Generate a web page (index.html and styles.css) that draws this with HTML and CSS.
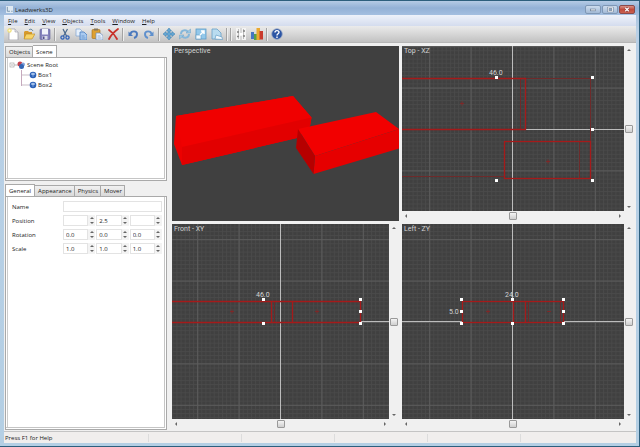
FILE: index.html
```html
<!DOCTYPE html>
<html lang="en">
<head>
	<meta charset="UTF-8">
	<title>Leadwerks3D</title>
	<link rel="stylesheet" href="styles.css">
</head>
<body>
<div class="window">
	<header class="titlebar">
		<svg class="app-icon" viewBox="0 0 8 8"><rect width="8" height="8" fill="#dfe9f2"/><path d="M1.500 1v5h3M6 6h1.500" stroke="#6f8ba5" fill="none"/></svg>
		<h1>Leadwerks3D</h1>
		<div class="win-buttons">
			<button type="button" aria-label="Minimize"><svg viewBox="0 0 16 8"><rect x="5" y="3.500" width="6" height="2" fill="#fff" stroke="#60748c" stroke-width=".7"/></svg></button>
			<button type="button" aria-label="Maximize"><svg viewBox="0 0 16 8"><rect x="6" y="2" width="5" height="4" fill="#8fa6c2" stroke="#60748c" stroke-width="2"/><rect x="6" y="2" width="5" height="4" fill="none" stroke="#fff"/></svg></button>
			<button type="button" class="close" aria-label="Close"><svg viewBox="0 0 16 8"><path d="M6 2l4 4M10 2l-4 4" stroke="#803030" stroke-width="2.500"/><path d="M6 2l4 4M10 2l-4 4" stroke="#fff" stroke-width="1.400"/></svg></button>
		</div>
	</header>

	<nav class="menubar">
		<a href="#"><u>F</u>ile</a>
		<a href="#"><u>E</u>dit</a>
		<a href="#"><u>V</u>iew</a>
		<a href="#"><u>O</u>bjects</a>
		<a href="#"><u>T</u>ools</a>
		<a href="#"><u>W</u>indow</a>
		<a href="#"><u>H</u>elp</a>
	</nav>

	<div class="toolbar">
		<button type="button" aria-label="New"><svg viewBox="0 0 12 12"><path d="M2 1h6l3 3v8H2z" fill="#fff" stroke="#9a9aa4" stroke-width=".7"/><path d="M8 1v3h3" fill="#e4e4ea" stroke="#9a9aa4" stroke-width=".6"/><circle cx="2.500" cy="2.500" r="2.200" fill="#f0df7a"/><circle cx="2.500" cy="2.500" r="1" fill="#fffbe0"/></svg></button>
		<button type="button" aria-label="Open"><svg viewBox="0 0 12 12"><path d="M1 4l1-1h3l1 1h3v7H1z" fill="#d79a2c"/><path d="M3 6h9l-3 5H1z" fill="#f7d468" stroke="#b98722" stroke-width=".6"/><path d="M6 2c1-1.500 3-1 4 1" stroke="#688ba8" fill="none"/></svg></button>
		<button type="button" aria-label="Save"><svg viewBox="0 0 12 12"><rect x="1" y="1" width="10" height="10.500" rx="1" fill="#8483bd" stroke="#5f5e98" stroke-width=".6"/><rect x="3" y="1" width="6" height="5.500" fill="#f1f4fb"/><rect x="3.500" y="8" width="5" height="3.500" fill="#d8dbe8"/><rect x="4" y="8.500" width="1.500" height="2.500" fill="#55548c"/></svg></button>
		<span class="sep"></span>
		<button type="button" aria-label="Cut"><svg viewBox="0 0 12 12"><path d="M4 1l3.500 7M8.500 1L4.500 8" stroke="#49688d" stroke-width="1.200"/><circle cx="3.500" cy="9.500" r="1.600" fill="none" stroke="#2f61b8" stroke-width="1.300"/><circle cx="8.500" cy="9.500" r="1.600" fill="none" stroke="#2f61b8" stroke-width="1.300"/></svg></button>
		<button type="button" aria-label="Copy"><svg viewBox="0 0 12 12"><path d="M1 1h4l2 2v5H1z" fill="#e6f0fb" stroke="#7fa5d2" stroke-width=".7"/><path d="M5 4h4l3 3v5H5z" fill="#a9caf0" stroke="#4a7dc0" stroke-width=".8"/><path d="M6.500 8h3M6.500 10h4" stroke="#4a7dc0" stroke-width=".6"/></svg></button>
		<button type="button" aria-label="Paste"><svg viewBox="0 0 12 12"><rect x="1" y="1.500" width="8" height="9" rx="1" fill="#dea132" stroke="#a06b1c" stroke-width=".6"/><rect x="3" y=".5" width="4" height="2" fill="#85775c"/><path d="M5 5h4l3 2.500V12H5z" fill="#e8f0fb" stroke="#6d8fbd" stroke-width=".7"/><path d="M6.500 8h3M6.500 10h4" stroke="#6d8fbd" stroke-width=".6"/></svg></button>
		<button type="button" aria-label="Delete"><svg viewBox="0 0 12 12"><path d="M2 2c3 2 6 5 8 9M11 1C7 4 4 7 2 11" fill="none" stroke="#c8322b" stroke-width="1.800" stroke-linecap="round"/></svg></button>
		<span class="sep"></span>
		<button type="button" aria-label="Undo"><svg viewBox="0 0 12 12"><path d="M3.500 6c.5-3.500 6.500-3.500 6.500 0 0 2-1 3.500-3 4" fill="none" stroke="#4b79bd" stroke-width="1.900"/><path d="M1.500 3.500v4.500H6z" fill="#4b79bd"/></svg></button>
		<button type="button" aria-label="Redo"><svg viewBox="0 0 12 12"><path d="M8.500 6C8 2.500 2 2.500 2 6c0 2 1 3.500 3 4" fill="none" stroke="#5f90cd" stroke-width="1.900"/><path d="M10.500 3.500v4.500H6z" fill="#5f90cd"/></svg></button>
		<span class="sep"></span>
		<button type="button" aria-label="Move"><svg viewBox="0 0 12 12"><path d="M6 0l2.500 3H7v2h2V3.500L12 6 9 8.500V7H7v2h1.500L6 12 3.500 9H5V7H3v1.500L0 6l3-2.500V5h2V3H3.500z" fill="#65a7d4" stroke="#3679aa" stroke-width=".5"/></svg></button>
		<button type="button" aria-label="Rotate"><svg viewBox="0 0 12 12"><path d="M2 6c0-4 5-5 7-2M10 6c0 4-5 5-7 2" fill="none" stroke="#85b7da" stroke-width="2"/><path d="M7 5h4.500V1zM5 7H.5v4z" fill="#9cc9e6" stroke="#6ba1c7" stroke-width=".5"/></svg></button>
		<button type="button" aria-label="Scale"><svg viewBox="0 0 12 12"><rect x="1" y="1" width="10" height="10" fill="#93c8ea" stroke="#5d9cc7" stroke-width=".8"/><rect x="1" y="7" width="5" height="4" fill="#f3fafe" stroke="#5d9cc7" stroke-width=".6"/><path d="M5 7l4-4M6 3h3v3" stroke="#fff" stroke-width="1.400" fill="none"/></svg></button>
		<button type="button" aria-label="Object properties"><svg viewBox="0 0 12 12"><path d="M1 1h5l4 4v6H1z" fill="#b9dcf0" stroke="#679fc6" stroke-width=".8"/><path d="M4 11l1-4 6 2 .5 2.500z" fill="#f2f9fd" stroke="#679fc6" stroke-width=".7"/></svg></button>
		<span class="sep"></span>
		<span class="sep"></span>
		<button type="button" aria-label="Options"><svg viewBox="0 0 12 12"><rect x="1" width="10" height="12" fill="#f4f4f4"/><path d="M3.500 1v10M8.500 1v10M6 0v5M6 8v4" stroke="#bcbcbc"/><path d="M2 4h2M8 3h2M2 8.500h2M8 8h2" stroke="#808080" stroke-width="1.500"/><path d="M5 6h3" stroke="#fff" stroke-width="2"/></svg></button>
		<button type="button" aria-label="Statistics"><svg viewBox="0 0 12 12"><rect x="0" y="4" width="3" height="7" fill="#4575c4"/><rect x="3" y="6" width="3" height="6" fill="#59a14a"/><rect x="5.500" y="0" width="3.500" height="12" fill="#eba92f"/><rect x="8.500" y="3" width="3.500" height="8.500" fill="#c93a2c"/></svg></button>
		<span class="sep"></span>
		<button type="button" aria-label="Help"><svg viewBox="0 0 12 12"><circle cx="6" cy="6" r="5.300" fill="#2c55a4" stroke="#9aa9c6" stroke-width=".8"/><path d="M4 4.500C4 2 8 2 8 4.300 8 5.800 6 5.700 6 7.500M6 8.400V10" fill="none" stroke="#fff" stroke-width="1.400"/></svg></button>
	</div>

	<main class="main">
		<aside class="sidebar">
			<section class="panel scene">
				<div class="tabs">
					<button type="button">Objects</button>
					<button type="button" class="active">Scene</button>
				</div>
				<div class="page">
					<ul class="tree">
						<li>
							<span class="root"><svg viewBox="0 0 16 8"><rect x="1" y="2" width="4" height="4" fill="#fff" stroke="#a9a9a9" stroke-width=".7"/><path d="M2 4h2M5 4h5" stroke="#8b8b8b" stroke-width=".6"/><circle cx="11" cy="3" r="2.500" fill="#c5404c"/><circle cx="14" cy="3.500" r="2" fill="#85a3d9"/><circle cx="12.500" cy="5.500" r="2.500" fill="#3566b4"/></svg>Scene Root</span>
							<ul>
								<li><svg viewBox="0 0 16 8"><path d="M0 4h8" stroke="#b2a0b0" stroke-width=".7"/><circle cx="11" cy="4" r="3.300" fill="#2c61b6"/><path d="M9 3l2-1 2 1-2 1zM11 4v2" fill="#b9d2f4" stroke="#b9d2f4" stroke-width=".5"/></svg>Box1</li>
								<li><svg viewBox="0 0 16 8"><path d="M0 4h8" stroke="#b2a0b0" stroke-width=".7"/><circle cx="11" cy="4" r="3.300" fill="#2c61b6"/><path d="M9 3l2-1 2 1-2 1zM11 4v2" fill="#b9d2f4" stroke="#b9d2f4" stroke-width=".5"/></svg>Box2</li>
							</ul>
						</li>
					</ul>
				</div>
			</section>

			<section class="panel props">
				<div class="tabs">
					<button type="button" class="active">General</button>
					<button type="button">Appearance</button>
					<button type="button">Physics</button>
					<button type="button">Mover</button>
				</div>
				<form class="page fields">
					<label for="name">Name</label>
					<input type="text" id="name" class="wide">

					<label for="pos-x">Position</label>
					<div class="spin"><input type="text" id="pos-x"><span><button type="button" class="up" aria-label="Up"></button><button type="button" class="down" aria-label="Down"></button></span></div>
					<div class="spin"><input type="text" aria-label="Position Y" value="2.5"><span><button type="button" class="up" aria-label="Up"></button><button type="button" class="down" aria-label="Down"></button></span></div>
					<div class="spin"><input type="text" aria-label="Position Z"><span><button type="button" class="up" aria-label="Up"></button><button type="button" class="down" aria-label="Down"></button></span></div>

					<label for="rot-x">Rotation</label>
					<div class="spin"><input type="text" id="rot-x" value="0.0"><span><button type="button" class="up" aria-label="Up"></button><button type="button" class="down" aria-label="Down"></button></span></div>
					<div class="spin"><input type="text" aria-label="Rotation Y" value="0.0"><span><button type="button" class="up" aria-label="Up"></button><button type="button" class="down" aria-label="Down"></button></span></div>
					<div class="spin"><input type="text" aria-label="Rotation Z" value="0.0"><span><button type="button" class="up" aria-label="Up"></button><button type="button" class="down" aria-label="Down"></button></span></div>

					<label for="scale-x">Scale</label>
					<div class="spin"><input type="text" id="scale-x" value="1.0"><span><button type="button" class="up" aria-label="Up"></button><button type="button" class="down" aria-label="Down"></button></span></div>
					<div class="spin"><input type="text" aria-label="Scale Y" value="1.0"><span><button type="button" class="up" aria-label="Up"></button><button type="button" class="down" aria-label="Down"></button></span></div>
					<div class="spin"><input type="text" aria-label="Scale Z" value="1.0"><span><button type="button" class="up" aria-label="Up"></button><button type="button" class="down" aria-label="Down"></button></span></div>
				</form>
			</section>
		</aside>

		<div class="views">
			<section class="view perspective">
				<svg class="canvas" viewBox="0 0 227 175" preserveAspectRatio="xMidYMid slice">
					<path d="M4 70L121 50l18.500 21.500L138 80l-13 12L10 119 2 98z" fill="#ec0000"/>
					<path d="M4 70L121 50l18.500 21.500L10 101z" fill="#f00000"/>
					<path d="M10 101l129.500-29.500L138 80l-13 12L10 119z" fill="#e20000"/>
					<path d="M126 83l78-17 23 17-84 27z" fill="#f20000"/>
					<path d="M143 110l84-27v19.500L141.500 128z" fill="#e60000"/>
					<path d="M126 83l17 27-1.500 18L124 102z" fill="#b60000"/>
					<text x="2" y="7">Perspective</text>
				</svg>
			</section>

			<section class="view">
				<!-- origin is the crossing of the two axes -->
				<svg class="canvas" viewBox="-110 -83 222 165" preserveAspectRatio="xMidYMid slice">
					<defs>
						<pattern id="minor" width="4.140" height="4.140" patternUnits="userSpaceOnUse"><path d="M0 .5h4.140M.5 0v4.140" stroke="#4a4a4a" stroke-width=".8"/></pattern>
						<pattern id="major" width="41.400" height="41.400" patternUnits="userSpaceOnUse"><path d="M0 .5h41.400M.5 0v41.400" stroke="#5c5c5c"/></pattern>
					</defs>
					<rect x="-400" y="-400" width="800" height="800" fill="url(#minor)"/>
					<rect x="-400" y="-400" width="800" height="800" fill="url(#major)"/>
					<path class="axis" d="M0.500 -400V400M14 0.500H400"/>
					<path class="faint" d="M8.500 -50V0M67.500 13V49M14 -50.500H79M78.500 -50V13M-400 47.500H-8"/>
					<path class="wire" d="M-400 -50.500H13.500V0.500H-400"/>
					<rect class="wire" x="-7.500" y="12.500" width="86" height="37"/>
					<path class="center" d="M-52 -25.500h4M-50 -27.500v4M34 32.500h4M36 30.500v4"/>
					<path class="handle" d="M-17-53h3v3h-3zM79-53h3v3h-3zM79-1h3v3h-3zM79 50h3v3h-3zM-17 50h3v3h-3z"/>
					<text x="-23" y="-54">46.0</text>
					<text x="-108" y="-76">Top - XZ</text>
				</svg>
				<div class="scroll vertical"><button type="button" class="up" aria-label="Scroll up"></button><input type="range" aria-label="Top vertical scroll"><button type="button" class="down" aria-label="Scroll down"></button></div>
				<div class="scroll"><button type="button" class="left" aria-label="Scroll left"></button><input type="range" aria-label="Top horizontal scroll"><button type="button" class="right" aria-label="Scroll right"></button></div>
			</section>

			<section class="view">
				<svg class="canvas" viewBox="-108 -98 217 195" preserveAspectRatio="xMidYMid slice">
					<rect x="-400" y="-400" width="800" height="800" fill="url(#minor)"/>
					<rect x="-400" y="-400" width="800" height="800" fill="url(#major)"/>
					<path class="axis" d="M0.500 -400V400M81 -0.500H400"/>
					<path class="faint" d="M-5.500 -20V0"/>
					<path class="wire" d="M-400 -20.500H80.500V0.500H-400M-8.500 -20V0M12.500 -20V0"/>
					<path class="center" d="M-50 -10.500h4M-48 -12.500v4M35 -10.500h4M37 -12.500v4"/>
					<path class="handle" d="M-18-24h3v3h-3zM79-24h3v3h-3zM79-12h3v3h-3zM79 0h3v3h-3zM-18 0h3v3h-3z"/>
					<text x="-24" y="-25">46.0</text>
					<text x="-106" y="-91">Front - XY</text>
				</svg>
				<div class="scroll vertical"><button type="button" class="up" aria-label="Scroll up"></button><input type="range" aria-label="Front vertical scroll"><button type="button" class="down" aria-label="Scroll down"></button></div>
				<div class="scroll"><button type="button" class="left" aria-label="Scroll left"></button><input type="range" aria-label="Front horizontal scroll"><button type="button" class="right" aria-label="Scroll right"></button></div>
			</section>

			<section class="view">
				<svg class="canvas" viewBox="-110 -98 222 195" preserveAspectRatio="xMidYMid slice">
					<rect x="-400" y="-400" width="800" height="800" fill="url(#minor)"/>
					<rect x="-400" y="-400" width="800" height="800" fill="url(#major)"/>
					<path class="axis" d="M0.500 -400V-20M0.500 0V400M-400 -0.500H-50M52 -0.500H400"/>
					<path class="faint" d="M16.500 -20V0M48.500 -20V0"/>
					<rect class="wire" x="-49.500" y="-20.500" width="101" height="21"/>
					<path class="wire" d="M1.500 -20V0M13.500 -20V0"/>
					<path class="center" d="M-26 -10.500h4M-24 -12.500v4M35 -10.500h4"/>
					<path class="handle" d="M-52-24h3v3h-3zM-1-24h3v3h-3zM50-24h3v3h-3zM-52-12h3v3h-3zM50-12h3v3h-3zM-52 0h3v3h-3zM-1 0h3v3h-3zM50 0h3v3h-3z"/>
					<text x="-7" y="-25">24.0</text>
					<text x="-63" y="-8">5.0</text>
					<text x="-108" y="-91">Left - ZY</text>
				</svg>
				<div class="scroll vertical"><button type="button" class="up" aria-label="Scroll up"></button><input type="range" aria-label="Left vertical scroll"><button type="button" class="down" aria-label="Scroll down"></button></div>
				<div class="scroll"><button type="button" class="left" aria-label="Scroll left"></button><input type="range" aria-label="Left horizontal scroll"><button type="button" class="right" aria-label="Scroll right"></button></div>
			</section>
		</div>
	</main>

	<footer class="statusbar">
		<span>Press F1 for Help</span><span></span><span></span><span></span><span></span><span></span>
	</footer>
</div>
</body>
</html>
```

FILE: styles.css
```css
*{
	box-sizing: border-box;
	margin: 0;
	padding: 0;
}
body{
	font: 6px/8px "Open Sans", "Noto Sans", sans-serif;
	color: #222;
}
button, input{
	font: inherit;
	color: inherit;
	border: 0;
	background: none;
	min-width: 0;
}
svg{
	display: block;
}
ul{
	list-style: none;
}
.window{
	display: flex;
	flex-direction: column;
	height: 100vh;
	padding: 0 3px 3px 4px;
	border: 1px solid #2d5f7d;
	border-left: 0;
	background: linear-gradient(#9fbcdc, #b9d0e6 30px, #b4cfe4);
}

/* title bar */
.titlebar{
	display: flex;
	align-items: center;
	height: 14px;
	margin: 0 -3px 0 -4px;
	padding: 3px 4px 0 6px;
	gap: 2px;
	background: linear-gradient(#b5cbe5, #93b1d6 50%, #a4bfe0);
}
.app-icon{
	width: 7px;
	height: 7px;
}
h1{
	flex: 1;
	font-size: 6px;
	font-weight: normal;
}
.win-buttons{
	display: flex;
	gap: 1px;
}
.win-buttons button{
	width: 16px;
	height: 9px;
	border: 1px solid #7e97b5;
	border-radius: 2px;
	background: linear-gradient(#cddced, #a3bad6);
}
.win-buttons svg{
	width: 14px;
	height: 7px;
}
.win-buttons .close{
	border-color: #8b4a4a;
	background: linear-gradient(#d99186, #c04b3c 50%, #cb6150);
}

/* menu */
.menubar{
	display: flex;
	align-items: center;
	gap: 7px;
	height: 11px;
	padding-left: 4px;
	background: linear-gradient(#eef2fa, #d4dcee);
}
.menubar a{
	color: #222;
	text-decoration: none;
}

/* toolbar */
.toolbar{
	display: flex;
	align-items: center;
	height: 17px;
	padding-left: 1px;
	border-bottom: 1px solid #b6b6b6;
	background: linear-gradient(#ebebeb, #c2c2c2);
}
.toolbar button{
	width: 16px;
	height: 16px;
	padding: 2px;
}
.toolbar svg{
	width: 12px;
	height: 12px;
}
.sep{
	width: 4px;
	height: 13px;
	background: linear-gradient(90deg, transparent 1px, #a3a3a3 1px 2px, #eee 2px 3px, transparent 3px);
}

.main{
	flex: 1;
	min-height: 0;
	display: flex;
	background: #f0f0f0;
}

/* sidebar */
.sidebar{
	flex: 0 0 168px;
	display: flex;
	flex-direction: column;
	gap: 3px;
	padding: 2px 5px 1px 1px;
}
.panel{
	display: flex;
	flex-direction: column;
	min-height: 0;
}
.scene{
	flex: 136;
}
.props{
	flex: 246;
}
.tabs{
	display: flex;
	align-items: flex-end;
	height: 12px;
}
.tabs button{
	height: 11px;
	padding: 0 2px 0 3px;
	border: 1px solid #a9a9a9;
	border-left-width: 0;
	border-bottom: 0;
	background: linear-gradient(#f1f1f1, #d9d9d9);
}
.tabs button:first-child{
	border-left-width: 1px;
}
.tabs .active{
	height: 12px;
	padding-right: 3px;
	background: #fff;
}
.page{
	flex: 1;
	min-height: 0;
	border: 1px solid #a9a9a9;
	background: #fff;
	box-shadow: inset -1px -1px #fff, inset -2px -2px #c5c5c5, inset 1px 0 #fff, inset 2px 0 #ccc;
}
.tree{
	padding: 2px 3px;
}
.tree li, .root{
	line-height: 10px;
}
.tree ul{
	margin-left: 12px;
	border-left: 1px solid #c6a9bd;
	height: 16px;
}
.tree ul li, .root{
	display: flex;
	align-items: center;
}
.root{
	gap: 2px;
}
.tree svg{
	width: 16px;
	height: 8px;
}
.fields{
	display: grid;
	grid-template-columns: 50px repeat(3, minmax(0, 1fr));
	align-content: start;
	align-items: center;
	gap: 3px 1px;
	padding: 4px 4px 4px 6px;
}
.fields input{
	width: 100%;
	height: 11px;
	padding: 0 2px;
	border: 1px solid #e3e3e3;
	background: #fff;
}
.fields .wide{
	grid-column: 2 / 5;
}
.spin{
	display: flex;
}
.spin span{
	flex: 0 0 7px;
	display: flex;
	flex-direction: column;
	background: #f3f3f3;
}
.spin button{
	flex: 1;
}
.up, .down, .left, .right{
	display: flex;
	align-items: center;
	justify-content: center;
}
.up::before, .down::before, .left::before, .right::before{
	content: "";
	border: 2px solid transparent;
}
.up::before{
	border-top-width: 0;
	border-bottom-color: #666;
}
.down::before{
	border-bottom-width: 0;
	border-top-color: #666;
}
.left::before{
	border-left-width: 0;
	border-right-color: #666;
}
.right::before{
	border-right-width: 0;
	border-left-color: #666;
}

/* viewports */
.views{
	flex: 1;
	min-width: 0;
	display: grid;
	grid-template-columns: minmax(0, 227fr) minmax(0, 232fr);
	grid-template-rows: minmax(0, 175fr) minmax(0, 205fr);
	gap: 3px;
	padding: 3px 2px 2px 0;
}
.view{
	display: grid;
	grid-template-columns: minmax(0, 1fr) 10px;
	grid-template-rows: minmax(0, 1fr) 10px;
}
.perspective{
	grid-template-columns: minmax(0, 1fr);
	grid-template-rows: minmax(0, 1fr);
}
.canvas{
	width: 100%;
	height: 100%;
	background: #404040;
}
.canvas text{
	font: 7px Roboto, "Liberation Sans", sans-serif;
	fill: #d4d4d4;
}
.axis, .wire, .faint, .center{
	fill: none;
}
.axis{
	stroke: #bcbcbc;
}
.wire{
	stroke: #a51a1a;
	stroke-width: 1.3;
}
.faint{
	stroke: #6e2a2a;
}
.center{
	stroke: #7c2828;
}
.handle{
	fill: #fff;
}
.scroll{
	display: flex;
	min-width: 0;
	min-height: 0;
}
.scroll.vertical{
	flex-direction: column;
}
.scroll button{
	flex: 0 0 8px;
}
.scroll input{
	flex: 1;
	appearance: none;
	width: 100%;
	height: 100%;
	min-height: 0;
}
.vertical input{
	writing-mode: vertical-lr;
}
.scroll input::-webkit-slider-thumb{
	appearance: none;
	width: 8px;
	height: 8px;
	border: 1px solid #999;
	border-radius: 1px;
	background: linear-gradient(#f4f4f4, #cfcfcf);
}

/* status bar */
.statusbar{
	display: grid;
	grid-template-columns: 144px repeat(4, 93px) 1fr;
	align-items: center;
	height: 12px;
	padding-left: 1px;
	border-top: 1px solid #c4c4c4;
	background: #f0eeed;
}
.statusbar span{
	height: 8px;
	border-right: 1px solid #dcdcdc;
}
.statusbar span:last-child{
	border: 0;
}
```
